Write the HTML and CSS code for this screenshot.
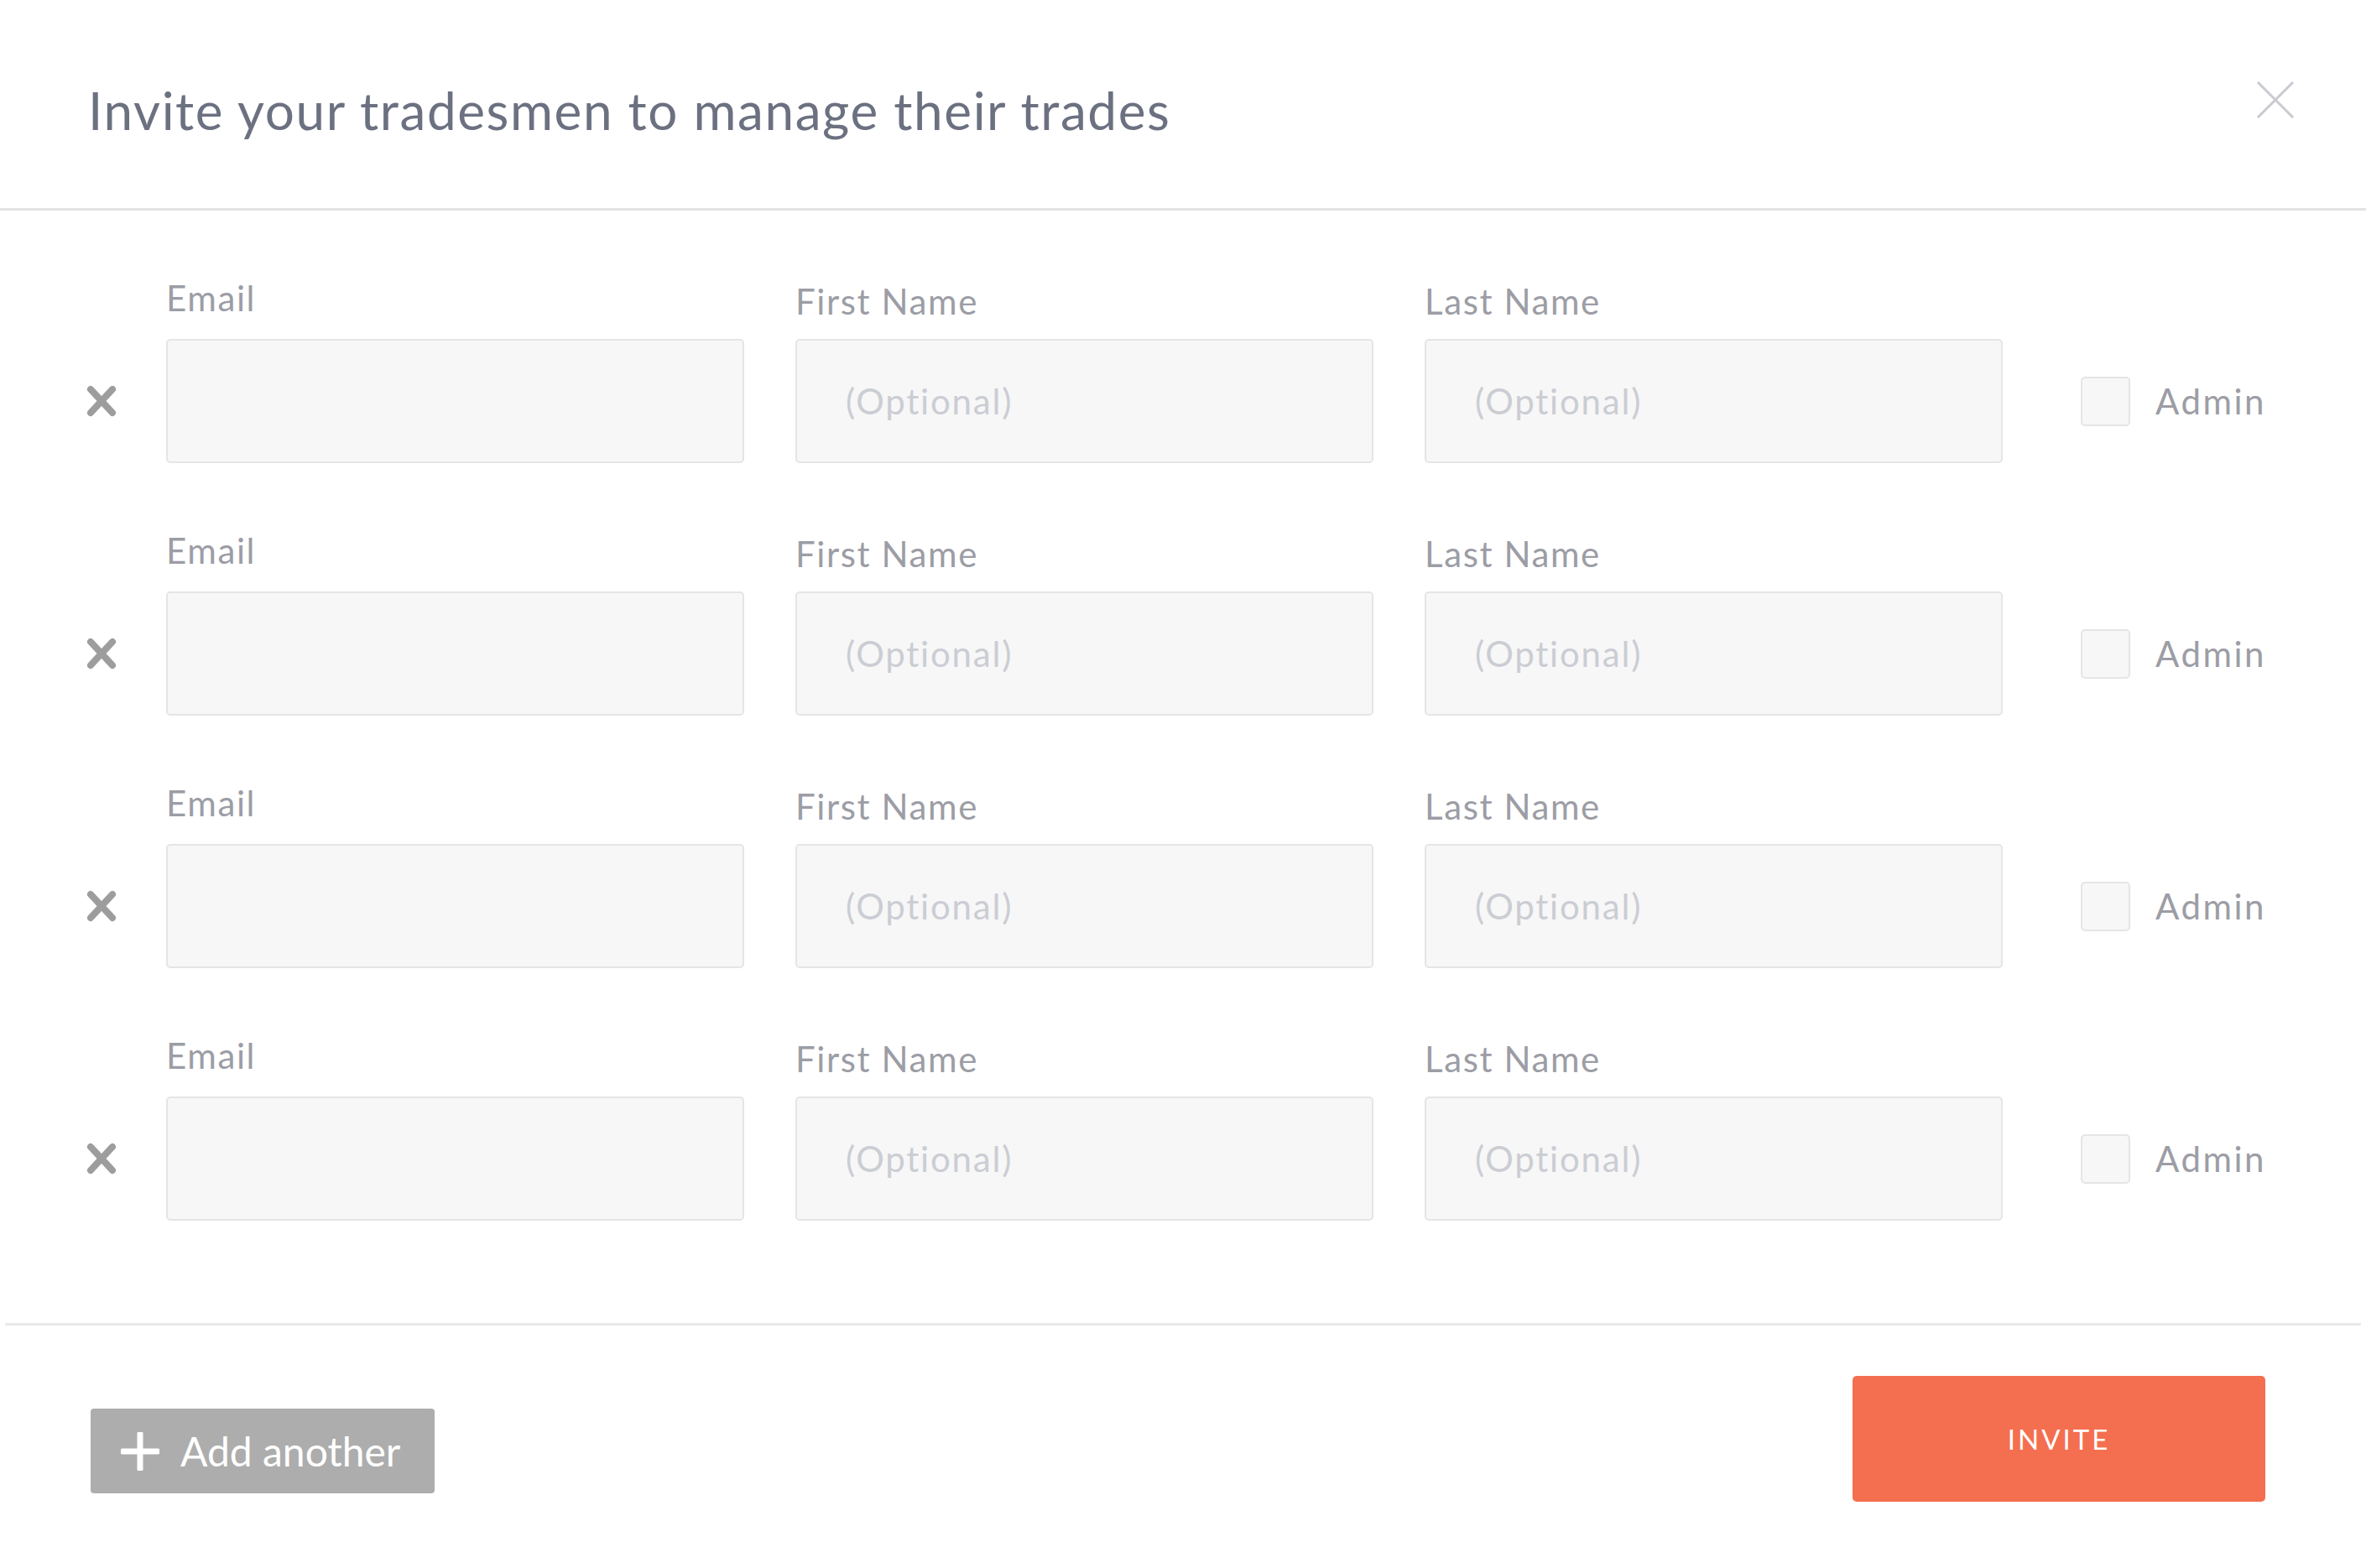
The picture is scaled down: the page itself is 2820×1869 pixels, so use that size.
FILE: index.html
```html
<!DOCTYPE html>
<html lang="en">
<head>
<meta charset="utf-8">
<title>Invite tradesmen</title>
<link rel="stylesheet" href="styles.css">
</head>
<body>
<div class="modal">
  <header class="modal-header">
    <h1 class="title">Invite your tradesmen to manage their trades</h1>
    <button class="close" aria-label="Close">
      <svg viewBox="0 0 46 44" width="46" height="44"><path d="M2 1 L44 43 M44 1 L2 43" stroke="#c9cbd1" stroke-width="3" fill="none"/></svg>
    </button>
  </header>

  <div class="modal-body">
    <div class="row">
      <button class="remove" aria-label="Remove"><svg viewBox="0 0 38 38" width="38" height="38"><path d="M6 5 L32 33 M32 5 L6 33" stroke="#9d9d9d" stroke-width="8" stroke-linecap="round" fill="none"/></svg></button>
      <div class="field field-email"><label class="label">Email</label><input class="input" type="text"></div>
      <div class="field"><label class="label">First Name</label><input class="input" type="text" placeholder="(Optional)"></div>
      <div class="field"><label class="label">Last Name</label><input class="input" type="text" placeholder="(Optional)"></div>
      <label class="admin"><span class="checkbox"></span><span class="admin-text">Admin</span></label>
    </div>
    <div class="row">
      <button class="remove" aria-label="Remove"><svg viewBox="0 0 38 38" width="38" height="38"><path d="M6 5 L32 33 M32 5 L6 33" stroke="#9d9d9d" stroke-width="8" stroke-linecap="round" fill="none"/></svg></button>
      <div class="field field-email"><label class="label">Email</label><input class="input" type="text"></div>
      <div class="field"><label class="label">First Name</label><input class="input" type="text" placeholder="(Optional)"></div>
      <div class="field"><label class="label">Last Name</label><input class="input" type="text" placeholder="(Optional)"></div>
      <label class="admin"><span class="checkbox"></span><span class="admin-text">Admin</span></label>
    </div>
    <div class="row">
      <button class="remove" aria-label="Remove"><svg viewBox="0 0 38 38" width="38" height="38"><path d="M6 5 L32 33 M32 5 L6 33" stroke="#9d9d9d" stroke-width="8" stroke-linecap="round" fill="none"/></svg></button>
      <div class="field field-email"><label class="label">Email</label><input class="input" type="text"></div>
      <div class="field"><label class="label">First Name</label><input class="input" type="text" placeholder="(Optional)"></div>
      <div class="field"><label class="label">Last Name</label><input class="input" type="text" placeholder="(Optional)"></div>
      <label class="admin"><span class="checkbox"></span><span class="admin-text">Admin</span></label>
    </div>
    <div class="row">
      <button class="remove" aria-label="Remove"><svg viewBox="0 0 38 38" width="38" height="38"><path d="M6 5 L32 33 M32 5 L6 33" stroke="#9d9d9d" stroke-width="8" stroke-linecap="round" fill="none"/></svg></button>
      <div class="field field-email"><label class="label">Email</label><input class="input" type="text"></div>
      <div class="field"><label class="label">First Name</label><input class="input" type="text" placeholder="(Optional)"></div>
      <div class="field"><label class="label">Last Name</label><input class="input" type="text" placeholder="(Optional)"></div>
      <label class="admin"><span class="checkbox"></span><span class="admin-text">Admin</span></label>
    </div>
  </div>

  <footer class="modal-footer">
    <button class="btn-add">
      <svg viewBox="0 0 46 46" width="46" height="46"><path d="M23 2 V44 M2 23 H44" stroke="#ffffff" stroke-width="7" stroke-linecap="round" fill="none"/></svg>
      <span>Add another</span>
    </button>
    <button class="btn-invite">INVITE</button>
  </footer>
</div>
</body>
</html>
```

FILE: styles.css
```css
* { box-sizing: border-box; }

html, body {
  margin: 0;
  padding: 0;
  background: #ffffff;
}

body {
  font-family: Lato, "Open Sans", "Liberation Sans", sans-serif;
  color: #9b9ca4;
}

.modal {
  width: 2820px;
  min-height: 1869px;
  background: #ffffff;
}

.modal-header {
  position: relative;
  height: 251px;
  padding: 100px 0 0 105px;
  border-bottom: 3px solid #e3e3e5;
}

.title {
  margin: 0;
  font-size: 62px;
  line-height: 62px;
  font-weight: 400;
  color: #6c7181;
  letter-spacing: 1.6px;
}

.close {
  position: absolute;
  top: 97px;
  right: 85px;
  width: 46px;
  height: 44px;
  padding: 0;
  border: 0;
  background: none;
  display: flex;
}

.modal-body {
  padding: 83px 0 122px 0;
  display: flex;
  flex-direction: column;
  gap: 83px;
}

.row {
  display: flex;
  align-items: flex-end;
  padding-left: 102px;
}

.remove {
  width: 38px;
  height: 148px;
  padding: 0;
  border: 0;
  background: none;
  display: flex;
  align-items: center;
  margin-right: 58px;
}

.field {
  width: 689px;
  margin-right: 61px;
  display: flex;
  flex-direction: column;
}

.label {
  display: block;
  font-size: 42px;
  line-height: 50px;
  height: 50px;
  margin-bottom: 20px;
  letter-spacing: 1.6px;
  color: #9c9da5;
}

.field-email .label {
  margin-top: -6px;
  margin-bottom: 24px;
}

.input {
  width: 689px;
  height: 148px;
  background: #f7f7f7;
  border: 2px solid #e5e5e7;
  border-radius: 5px;
  padding: 0 0 0 58px;
  font-family: Lato, "Open Sans", "Liberation Sans", sans-serif;
  font-size: 42px;
  letter-spacing: 1.8px;
  color: #6c7181;
  outline: none;
}

.input::placeholder {
  color: #cbcdd3;
}

.admin {
  height: 148px;
  display: flex;
  align-items: center;
  margin-left: 32px;
}

.checkbox {
  width: 59px;
  height: 59px;
  background: #f7f7f7;
  border: 2px solid #e5e5e7;
  border-radius: 5px;
  margin-right: 30px;
}

.admin-text {
  font-size: 42px;
  letter-spacing: 2.5px;
  color: #9c9da5;
}

.modal-footer {
  margin: 0 6px;
  border-top: 3px solid #e9e9eb;
  display: flex;
  justify-content: space-between;
  align-items: flex-start;
  padding: 60px 114px 0 102px;
}

.btn-add {
  margin-top: 39px;
  height: 101px;
  width: 410px;
  background: #adadad;
  border: 0;
  border-radius: 4px;
  color: #ffffff;
  display: flex;
  align-items: center;
  padding: 0 0 0 36px;
  gap: 25px;
  font-family: Lato, "Open Sans", "Liberation Sans", sans-serif;
  font-size: 48px;
}

.btn-invite {
  width: 492px;
  height: 150px;
  background: #f46f4f;
  border: 0;
  border-radius: 5px;
  color: #ffffff;
  font-family: Lato, "Open Sans", "Liberation Sans", sans-serif;
  font-size: 33px;
  letter-spacing: 3px;
  font-weight: 400;
}
```
